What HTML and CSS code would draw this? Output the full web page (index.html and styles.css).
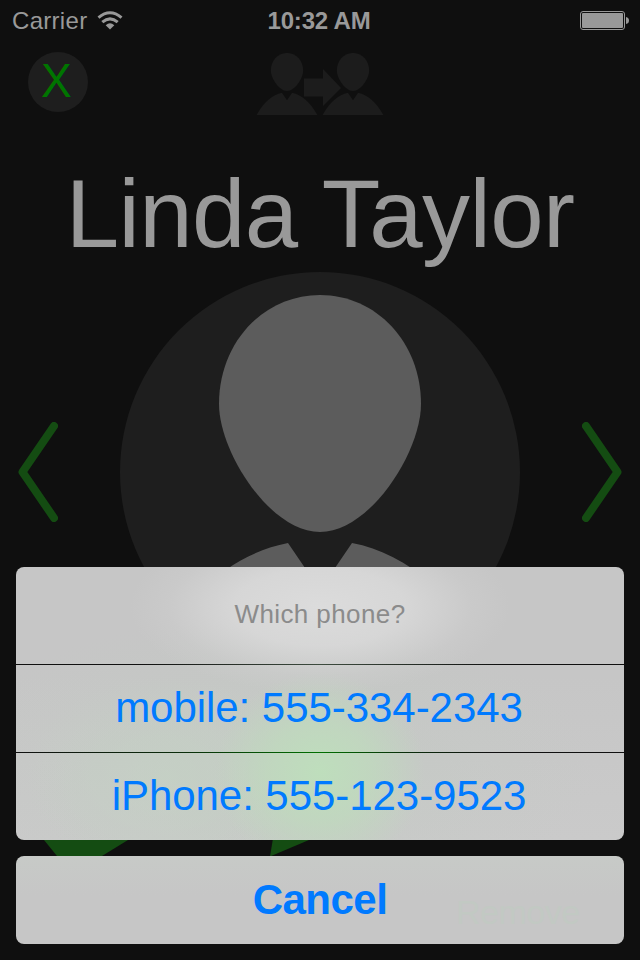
FILE: index.html
```html
<!DOCTYPE html>
<html lang="en">
<head>
    <meta charset="UTF-8">
    <meta name="viewport" content="width=device-width, initial-scale=1.0">
    <title>Linda Taylor</title>
    <link rel="stylesheet" href="styles.css">
</head>
<body>

    <div class="screen">
        <!-- Status bar -->
        <div class="status-bar">
            <div class="carrier">
                <span>Carrier</span>
                <svg class="wifi" width="26" height="19" viewBox="0 0 26 19">
                    <path d="M1.500 6.600 Q13 -3.200 24.500 6.600" fill="none" stroke="#999" stroke-width="3"/>
                    <path d="M5.300 11.200 Q13 4.600 20.700 11.200" fill="none" stroke="#999" stroke-width="3"/>
                    <path d="M8.700 14.200 Q13 10.200 17.300 14.200 L13 18.600 Z" fill="#999"/>
                </svg>
            </div>
            <div class="time">10:32 AM</div>
            <div class="battery">
                <svg width="50" height="20" viewBox="0 0 50 20">
                    <rect x="0.5" y="0.5" width="44" height="18" rx="2.5" fill="none" stroke="#999"/>
                    <rect x="2" y="2" width="41" height="15" rx="1" fill="#999"/>
                    <path d="M46 6 Q49 6.500 49 9.500 Q49 12.500 46 13 Z" fill="#999"/>
                </svg>
            </div>
        </div>

        <!-- Header -->
        <div class="header">
            <button class="close-btn"><span>X</span></button>
            <svg class="transfer" width="128" height="63" viewBox="256 53 128 63" fill="#1c1c1c">
                <defs>
                    <g id="person">
                        <path d="M200 23 C256 23 301 70 301 132 C301 180 250 260 200 260 C150 260 99 180 99 132 C99 70 144 23 200 23 Z"/>
                        <path d="M168 271 L200 318 L232 271 C290 282 345 330 390 410 L10 410 C55 330 110 282 168 271 Z"/>
                    </g>
                </defs>
                <use href="#person" transform="translate(255 49.3) scale(0.16)"/>
                <use href="#person" transform="translate(321 49.3) scale(0.16)"/>
                <path d="M304 78.500 H323 V69 L341 88 L323 106 V96.500 H304 Z"/>
            </svg>
        </div>

        <h1 class="name">Linda Taylor</h1>

        <!-- Contact picture -->
        <div class="contact">
            <svg class="arrow" width="40" height="100" viewBox="0 0 40 100">
                <path d="M36 4 L4.500 50 L36 96"/>
            </svg>
            <div class="avatar">
                <svg width="400" height="400" viewBox="0 0 400 400" fill="#5c5c5c">
                    <use href="#person"/>
                </svg>
            </div>
            <svg class="arrow" width="40" height="100" viewBox="0 0 40 100">
                <path d="M4 4 L35.500 50 L4 96"/>
            </svg>
        </div>

        <!-- Call and message buttons -->
        <svg class="actions" width="640" height="200" viewBox="0 672 640 200" fill="#144c12">
            <path d="M30 820 L44 840 L57 856 Q80 868 102 856 L128 840 L150 820 Z"/>
            <path d="M276 820 L270 856.500 L309 840 L340 820 Z"/>
            <ellipse cx="318" cy="768" rx="80" ry="68"/>
        </svg>

        <!-- Action sheet -->
        <div class="sheet">
            <div class="options">
                <div class="title">Which phone?</div>
                <div class="line line-top"></div>
                <button class="option">mobile: 555-334-2343</button>
                <div class="line line-green"></div>
                <button class="option">iPhone: 555-123-9523</button>
            </div>
            <button class="cancel">Cancel<span class="remove">Remove</span></button>
        </div>
    </div>

</body>
</html>
```

FILE: styles.css
```css
* {
    box-sizing: border-box;
}

body {
    margin: 0;
    background-color: #0f0f0f;
    font-family: "Liberation Sans", Arial, sans-serif;
}

button {
    border: none;
    padding: 0;
    font-family: inherit;
    cursor: pointer;
}

svg {
    display: block;
}

.screen {
    position: relative;
    width: 640px;
    height: 960px;
    margin: 0 auto;
    overflow: hidden;
    background-color: #0f0f0f;
}

/* Status bar */
.status-bar {
    display: grid;
    grid-template-columns: 1fr auto 1fr;
    align-items: center;
    height: 40px;
    padding: 2px 10px 0 12px;
    color: #999;
    font-size: 24px;
}

.carrier {
    display: flex;
    align-items: center;
    gap: 10px;
    letter-spacing: 0.3px;
}

.wifi {
    margin-top: -2px;
}

.time {
    margin-left: -4px;
    font-weight: bold;
    letter-spacing: -0.2px;
}

.battery {
    display: flex;
    justify-content: flex-end;
}

/* Header */
.header {
    display: grid;
    grid-template-columns: 228px auto;
    height: 120px;
    padding: 12px 28px 0;
}

.close-btn {
    width: 60px;
    height: 60px;
    padding: 0 3px 4px 0;
    border-radius: 50%;
    background-color: #1e1e1e;
    color: #007500;
    font-size: 49px;
    line-height: 56px;
}

.close-btn span {
    display: inline-block;
    transform: scaleX(0.94);
}

.transfer {
    margin-top: 1px;
}

.name {
    height: 112px;
    margin: 0;
    color: #999;
    font-size: 96px;
    font-weight: normal;
    letter-spacing: -0.6px;
    line-height: 107px;
    text-align: center;
    white-space: nowrap;
}

/* Contact picture */
.contact {
    display: flex;
    align-items: center;
    justify-content: space-between;
    padding: 0 18px;
}

.avatar {
    width: 400px;
    height: 400px;
    border-radius: 50%;
    background-color: #1e1e1e;
    overflow: hidden;
}

.arrow {
    fill: none;
    stroke: #144c12;
    stroke-width: 8;
    stroke-linecap: round;
    stroke-linejoin: round;
}

/* Action sheet */
.sheet {
    position: absolute;
    left: 16px;
    right: 16px;
    bottom: 16px;
    display: flex;
    flex-direction: column;
    gap: 16px;
}

.options {
    display: flex;
    flex-direction: column;
    border-radius: 8px;
    overflow: hidden;
    background:
        radial-gradient(ellipse 190px 86px at 304px 40px, rgba(222, 222, 222, 0.9), rgba(220, 220, 220, 0.75) 45%, rgba(210, 210, 210, 0.3) 80%, transparent),
        radial-gradient(ellipse 105px 100px at 304px 205px, #bedebc, rgba(191, 218, 189, 0.75) 50%, transparent),
        radial-gradient(ellipse 140px 100px at 150px 210px, rgba(196, 210, 196, 0.7), transparent),
        radial-gradient(ellipse 330px 150px at 250px 200px, rgba(195, 203, 195, 0.7), transparent),
        linear-gradient(#c6c6c6, #c6c6c6 40%, #cacaca);
}

.title {
    height: 97px;
    color: #8b8b8b;
    font-size: 26px;
    line-height: 94px;
    letter-spacing: 0.4px;
    text-align: center;
}

.line {
    height: 1px;
}

.line-top {
    background: linear-gradient(90deg, #101010 20%, #3d4c3f 50%, #101010 80%);
}

.line-green {
    background: linear-gradient(90deg, #101010, #0a2d0a 28%, #007000 50%, #0a2d0a 64%, #101010 78%);
}

.option {
    height: 87px;
    padding: 0 2px 2px 0;
    background: none;
    color: #007aff;
    font-size: 42px;
    line-height: 85px;
    letter-spacing: -0.05px;
}

.cancel {
    position: relative;
    height: 88px;
    border-radius: 8px;
    background: linear-gradient(#c7cac7, #c6c6c6 45%, #c6c6c6);
    color: #007aff;
    font-size: 42px;
    font-weight: bold;
    letter-spacing: -0.5px;
}

/* Button label that shows through the sheet */
.remove {
    position: absolute;
    left: 440px;
    top: 37px;
    color: #c2c9c3;
    font-size: 34px;
    font-weight: normal;
    letter-spacing: -0.5px;
}
```
